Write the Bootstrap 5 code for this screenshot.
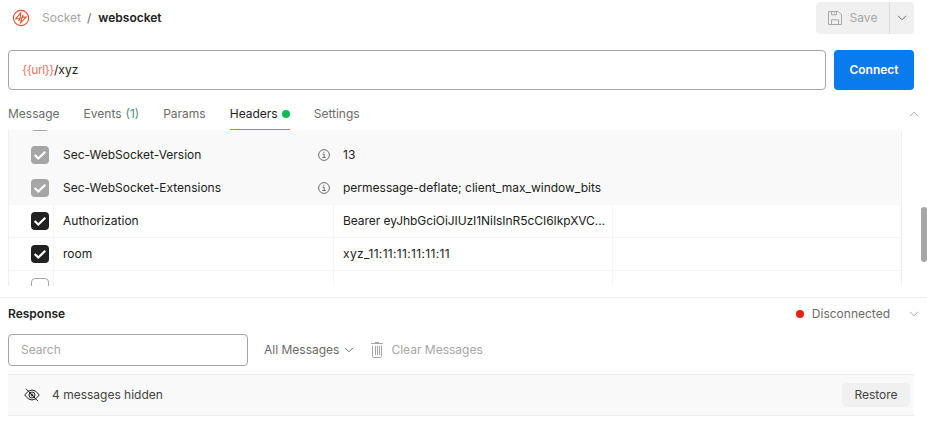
<!DOCTYPE html>
<html lang="en">
<head>
<meta charset="utf-8">
<meta name="viewport" content="width=device-width, initial-scale=1">
<title>websocket</title>
<link href="https://cdn.jsdelivr.net/npm/bootstrap@5.3.0/dist/css/bootstrap.min.css" rel="stylesheet">
<style>
body{font-family:Inter,"Liberation Sans",sans-serif;font-size:12px;line-height:16px;letter-spacing:0;color:#212121;height:425px;overflow:hidden;background:#fff}
svg{display:block;flex:none;fill:none;stroke:currentColor}
.muted{color:#6b6b6b}.faint{color:#a6a6a6}
.page{padding:0 13px 0 8px}
.topbar{height:36px}
.crumb-icon{margin:0 12px 0 4px}
.crumb-sep{margin:0 7px 0 6px}
.btn-save,.btn-more{background:#f0f0f0;height:32px;color:#a6a6a6}
.btn-save{width:74px;border-right:1px solid #d9d9d9;border-radius:4px 0 0 4px}
.btn-more{width:24px;color:#6b6b6b;border-radius:0 4px 4px 0}
.url-row{height:40px;margin-top:14px}
.url-box{border:1px solid #a6a6a6;border-radius:4px;padding:0 13px}
.var{color:#f47266;letter-spacing:-.45px}
.btn-connect{width:80px;background:#097bed;color:#fff;border-radius:4px;font-size:12px;font-weight:600}
.tabs{height:40px;gap:24px}
.tabs .tab{height:40px;padding:8px 0 0;color:#6b6b6b;border-bottom:1px solid transparent}
.tabs .tab.on{color:#212121;border-bottom-color:#ff6c37}
.count{color:#4f9180}
.led{width:8px;height:8px;border-radius:50%}
.edge-chevron{margin-right:-5px}
.grid-view{height:156px;width:894px;overflow:hidden;border:solid #f0f0f0;border-width:0 1px}
.grid-rows{margin-top:-24px}
.line{height:33px;display:grid;grid-template-columns:45px 280px 279px 1fr;border-bottom:1px solid #f5f5f5}
.line>div{border-right:1px solid #f5f5f5;min-width:0;padding-left:9px;display:flex;align-items:center}
.line>div:last-child{border-right:0}
.line.auto{background:#f9f9f9;border-color:#f9f9f9}.line.auto>div{border-color:#f9f9f9}
.line>.pick{padding:0 4px 0 0;justify-content:flex-end}
.line>.val{padding-right:4px;white-space:nowrap}
.digits{letter-spacing:.33px}
.token{letter-spacing:-.06px}
.tick{width:18px;height:18px;border-radius:4px;background:#212121;color:#fff}
.auto .tick{background:#a6a6a6}
.tick.off{background:#fff;border:1px solid #a6a6a6}
.info{margin-right:3px;color:#6b6b6b}
.response{margin-top:11px;border-top:1px solid #ededed}
.response-head{height:32px}
.state{margin-right:19px}
.search{width:240px;height:32px;border:1px solid #a6a6a6;border-radius:4px;padding:0 12px 1px;font-size:12px;outline:0;color:#212121}
.search::placeholder{color:#a6a6a6;opacity:1}
.filters{margin-top:4px}
.filter-chevron{margin:0 17px 0 5px}
.hidden-bar{height:42px;margin-top:8px;background:#f9f9f9;border:solid #ededed;border-width:1px 0;padding:0 4px 0 16px}
.hidden-count{color:#424242}
.btn-restore{background:#f0f0f0;border-radius:4px;width:68px;height:24px;color:#424242}
.thumb{position:absolute;left:921px;top:207px;width:6px;height:55px;border-radius:3px;background:#a6a6a6}
button{border:0;padding:0;letter-spacing:inherit}
</style>
</head>
<body>
<svg width="0" height="0" class="position-absolute">
  <symbol id="down" viewBox="0 0 10 6"><path d="M1 .8l4 4 4-4"/></symbol>
  <symbol id="check" viewBox="0 0 18 18"><path d="M3.7 9l3.6 3.5L14.3 5.8" stroke-width="2.2"/></symbol>
  <symbol id="info" viewBox="0 0 12 12"><circle cx="6" cy="6" r="5.4"/><path d="M4.5 5.2h1.7v3M4.3 8.5h3.5M5.3 3.3h1.2"/></symbol>
</svg>
<header class="topbar page d-flex align-items-center">
  <svg class="crumb-icon" style="color:#d9532c" width="18" height="18" viewBox="0 0 18 18" stroke-width="1.1"><circle cx="9" cy="9" r="7.6"/><path d="M3.8 9.7L8.7 4 8 9.7zM10 8.1h4.2L8.6 13.8zM10 8.1l1.3-2.4M8 9.7l-1.3 2.4"/></svg>
  <span class="faint">Socket</span><span class="muted crumb-sep">/</span><span class="fw-semibold">websocket</span>
  <div class="d-flex ms-auto">
    <button class="btn-save d-flex align-items-center justify-content-center gap-2"><svg width="14" height="14" viewBox="0 0 14 14"><path d="M.5.5h9.8l3.2 3.2v9.8H.5zM3.5.5v3.3h5V.5M3.5 13.5V8.8h7v4.7M6.7 1.5v1"/></svg>Save</button>
    <button class="btn-more d-flex align-items-center justify-content-center" aria-label="More"><svg width="10" height="6"><use href="#down"/></svg></button>
  </div>
</header>
<div class="page">
  <div class="url-row d-flex gap-2">
    <div class="url-box flex-grow-1 d-flex align-items-center"><span class="var">{{url}}</span><span>/xyz</span></div>
    <button class="btn-connect">Connect</button>
  </div>
  <nav class="tabs d-flex">
    <div class="tab d-flex align-items-center">Message</div>
    <div class="tab d-flex align-items-center gap-1">Events <span class="count">(1)</span></div>
    <div class="tab d-flex align-items-center">Params</div>
    <div class="tab on d-flex align-items-center gap-1">Headers <span class="led" style="background:#0cbb52"></span></div>
    <div class="tab d-flex align-items-center">Settings</div>
    <div class="ms-auto faint d-flex align-items-center pt-2 edge-chevron"><svg width="10" height="6" viewBox="0 0 10 6"><path d="M1 5.2l4-4 4 4"/></svg></div>
  </nav>
  <section class="grid-view">
    <div class="grid-rows">
      <div class="line auto"><div class="pick"><span class="tick"><svg width="18" height="18"><use href="#check"/></svg></span></div><div></div><div></div><div></div></div>
      <div class="line auto"><div class="pick"><span class="tick"><svg width="18" height="18"><use href="#check"/></svg></span></div><div class="justify-content-between">Sec-WebSocket-Version<svg class="info" width="12" height="12"><use href="#info"/></svg></div><div class="val">13</div><div></div></div>
      <div class="line auto"><div class="pick"><span class="tick"><svg width="18" height="18"><use href="#check"/></svg></span></div><div class="justify-content-between">Sec-WebSocket-Extensions<svg class="info" width="12" height="12"><use href="#info"/></svg></div><div class="val">permessage-deflate; client_max_window_bits</div><div></div></div>
      <div class="line"><div class="pick"><span class="tick"><svg width="18" height="18"><use href="#check"/></svg></span></div><div>Authorization</div><div class="val token">Bearer eyJhbGciOiJIUzI1NiIsInR5cCI6IkpXVC...</div><div></div></div>
      <div class="line"><div class="pick"><span class="tick"><svg width="18" height="18"><use href="#check"/></svg></span></div><div>room</div><div class="val digits">xyz_11:11:11:11:11:11</div><div></div></div>
      <div class="line"><div class="pick"><span class="tick off"></span></div><div></div><div></div><div></div></div>
    </div>
  </section>
</div>
<section class="response page">
  <div class="response-head d-flex align-items-center"><span class="fw-semibold">Response</span>
    <span class="led ms-auto me-2" style="background:#eb2013"></span><span class="muted state">Disconnected</span>
    <svg class="faint edge-chevron" width="10" height="6"><use href="#down"/></svg>
  </div>
  <div class="filters d-flex align-items-center">
    <input class="search" placeholder="Search">
    <span class="muted ms-3">All Messages</span><svg class="muted filter-chevron" width="10" height="6"><use href="#down"/></svg>
    <svg class="faint" width="12" height="16" viewBox="0 0 12 16"><path d="M0 1.5h12M4 .5h4M1.5 3.5v11q0 1 1 1h7q1 0 1-1v-11M4.5 4v9M6.5 4v9M8.5 4v9"/></svg>
    <span class="faint ms-2">Clear Messages</span>
  </div>
  <div class="hidden-bar d-flex align-items-center">
    <svg width="16" height="14" viewBox="0 0 16 14"><path d="M.7 7Q4 2 8 2t7.3 5Q12 12 8 12T.7 7zM2 .8l12 12.4"/><circle cx="8" cy="7" r="3"/><circle cx="8" cy="7" r="1"/></svg>
    <span class="ms-2 ps-1 hidden-count">4 messages hidden</span>
    <button class="btn-restore ms-auto">Restore</button>
  </div>
</section>
<div class="thumb"></div>
<script src="https://cdn.jsdelivr.net/npm/bootstrap@5.3.0/dist/js/bootstrap.bundle.min.js"></script>
</body>
</html>
